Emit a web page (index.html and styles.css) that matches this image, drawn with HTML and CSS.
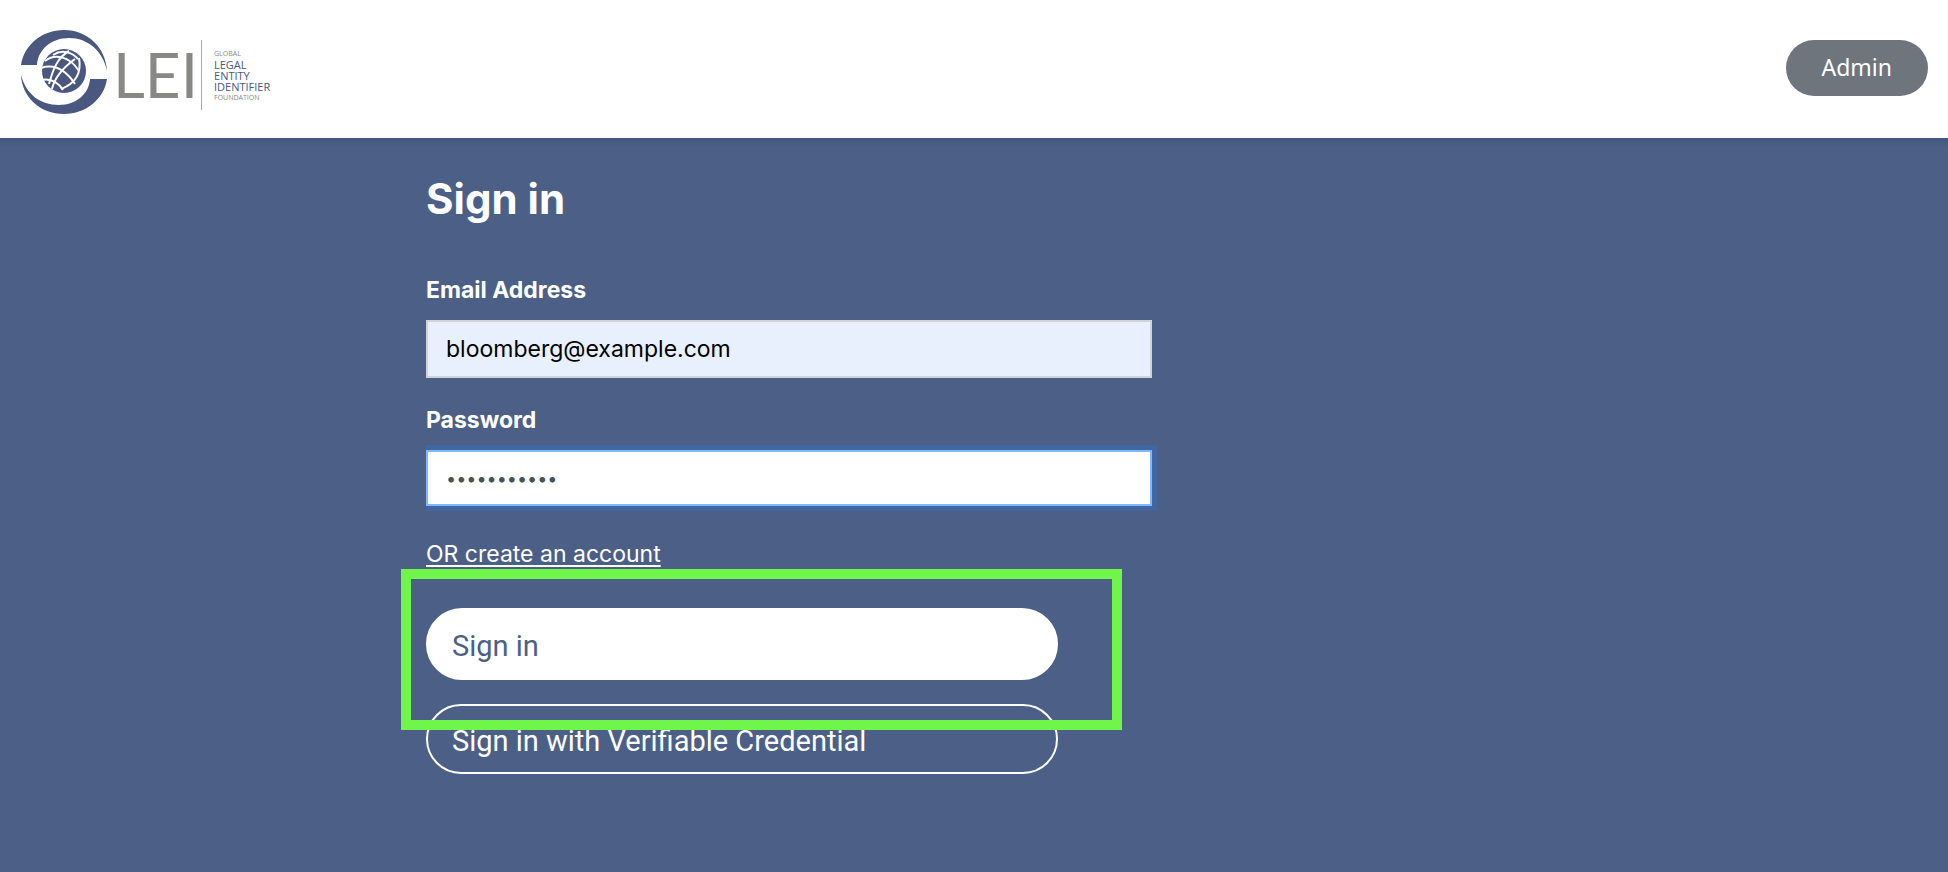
FILE: index.html
```html
<!DOCTYPE html>
<html lang="en">
<head>
<meta charset="utf-8">
<meta name="viewport" content="width=device-width, initial-scale=1">
<title>Sign in</title>
<link rel="stylesheet" href="styles.css">
</head>
<body>
<header class="topbar">
  <a class="brand" href="#" aria-label="Global Legal Entity Identifier Foundation">
    <svg class="brand-mark" viewBox="0 0 88 86" aria-hidden="true">
      <path class="ink" d="M1 36C4 16 22 1 44 1c24 0 42 18 43 41C83 22 68 9 49 9 32 9 18 20 17 36z"/>
      <path class="ink" d="M1 46c5 19 19 30 38 30 17 0 30-11 31-26h17C84 70 66 85 44 85 20 85 2 68 1 46z"/>
      <circle class="ink" cx="44" cy="42" r="22"/>
      <g class="grid">
        <path d="M25 32C34 25 49 26 59 42"/>
        <path d="M21 39C33 35 45 40 55 55"/>
        <path d="M21 51C31 49 38 53 43 61"/>
        <path d="M49 22C38 28 33 40 29 55"/>
        <path d="M55 30C44 38 35 47 32 60"/>
        <path d="M59 29C62 45 54 55 41 60"/>
        <path d="M33 26C42 20 52 23 58 30"/>
      </g>
    </svg>
    <span class="brand-initials">LEI</span>
    <span class="brand-name">
      <span class="minor">GLOBAL</span>
      <span>LEGAL</span>
      <span>ENTITY</span>
      <span>IDENTIFIER</span>
      <span class="minor">FOUNDATION</span>
    </span>
  </a>
  <button class="admin" type="button">Admin</button>
</header>
<main class="page">
  <div class="container">
    <form class="signin">
      <h1>Sign in</h1>
      <label for="email">Email Address</label>
      <input class="email" id="email" type="email" value="bloomberg@example.com">
      <label for="password">Password</label>
      <div class="focus-clip"><input class="password" id="password" type="password" value="bloomberg12"></div>
      <a class="create" href="#">OR create an account</a>
      <div class="actions">
        <button class="primary" type="submit">Sign in</button>
        <button class="outline" type="button">Sign in with Verifiable Credential</button>
        <div class="highlight" aria-hidden="true"></div>
      </div>
    </form>
  </div>
</main>
</body>
</html>
```
FILE: styles.css
```css
* { box-sizing: border-box; }
body {
  margin: 0;
  min-height: 100vh;
  display: flex;
  flex-direction: column;
  background: #4c6087;
  color: #fff;
  font: 23px/36px Inter, "Liberation Sans", sans-serif;
}
button, input { font: inherit; }
.topbar {
  height: 138px;
  flex: none;
  display: flex;
  align-items: flex-start;
  justify-content: space-between;
  padding: 0 20px;
  background: #fff;
}
.brand {
  display: flex;
  align-items: flex-start;
  padding-top: 29px;
  text-decoration: none;
  color: #4a5880;
  font-family: "Open Sans", "Noto Sans", sans-serif;
}
.brand-mark { width: 88px; height: 86px; }
.ink { fill: #4a5880; }
.grid { fill: none; stroke: #fff; stroke-width: 2; }
.brand-initials {
  margin: 12px 0 0 5px;
  color: #888886;
  font-size: 62px;
  line-height: 66px;
  font-family: Lato, sans-serif;
  font-weight: 400;
}
.brand-name {
  display: flex;
  flex-direction: column;
  height: 70px;
  margin: 11px 0 0 3px;
  padding: 8px 0 0 12px;
  border-left: 1px solid #aaa;
  font-size: 11px;
  line-height: 11px;
}
.brand-name .minor { color: #888; font-size: 7px; line-height: 11px; }
.admin {
  height: 56px;
  margin-top: 40px;
  padding: 0 36px 2px;
  border: 0;
  border-radius: 28px;
  background: #6e757d;
  color: #fff;
  font-family: "Noto Sans", sans-serif;
}
.page {
  flex: 1;
  padding: 36px 20px 0;
  background: linear-gradient(#435880, #4c6087 10px);
}
.container { max-width: 1096px; margin: 0 auto; }
.signin { display: flex; flex-direction: column; max-width: 726px; }
h1 { margin: 0 0 44px; font-size: 42px; line-height: 50px; font-weight: 700; }
label { margin-bottom: 8px; line-height: 44px; font-weight: 700; font-size: 23px; }
input {
  display: block;
  width: 100%;
  border: 2px solid #ced4da;
  border-radius: 0;
  padding: 0 18px;
  outline: 0;
}
.email { height: 58px; background: #e8effd; color: #000; margin-bottom: 20px; }
.focus-clip { clip-path: inset(-8px -8px -8px 0); }
.password {
  height: 56px;
  border-color: #80b8fc;
  background: #fff;
  color: #495057;
  font-size: 18px;
  box-shadow: 0 0 0 5px #4266a0;
}
.create { align-self: flex-start; margin-top: 30px; color: #fff; text-underline-offset: 3px; }
.actions {
  position: relative;
  display: flex;
  flex-direction: column;
  gap: 24px;
  max-width: 632px;
  margin-top: 36px;
}
.actions button {
  padding: 4px 24px 0;
  border: 2px solid #fff;
  border-radius: 36px;
  text-align: left;
  font-family: Roboto, sans-serif;
  font-size: 29px;
}
.actions .primary { height: 72px; background: #fff; color: #4c6087; }
.actions .outline { height: 70px; background: transparent; color: #fff; }
.highlight {
  position: absolute;
  inset: -39px -64px 44px -25px;
  border: 10px solid #70f64a;
  pointer-events: none;
}
```
